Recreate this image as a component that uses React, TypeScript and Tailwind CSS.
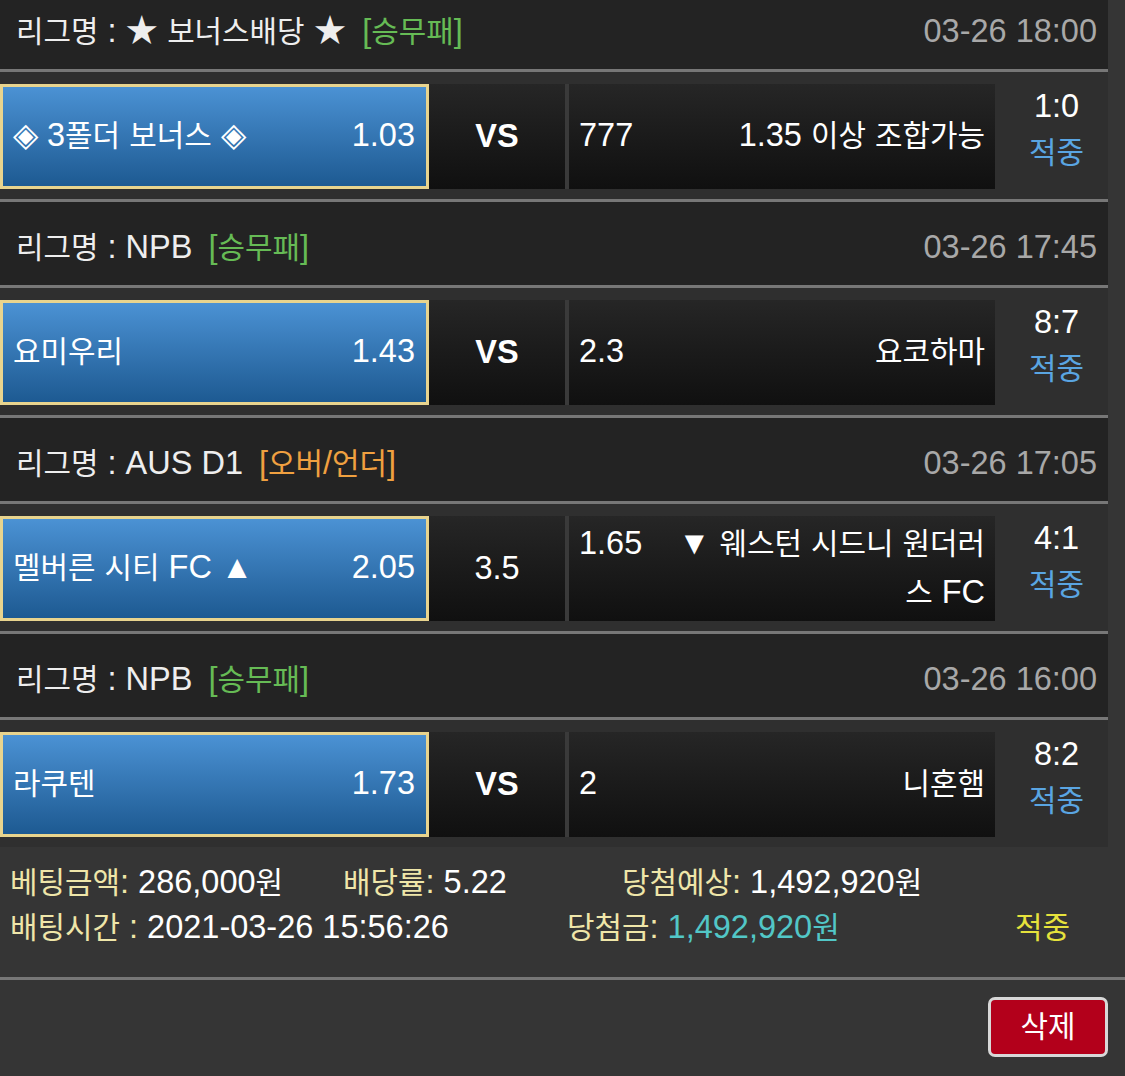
const FONT = { fontFamily: '"Liberation Sans", "Noto Sans CJK KR", sans-serif' };

// Hangul glyphs run a little narrower than the Latin ones in the original,
// so Hangul syllables get a slightly smaller size than digits and letters.
function K({ s }: { s: string }) {
  return (
    <>
      {s.split(/([가-힣]+)/).map((p, i) =>
        /[가-힣]/.test(p) ? (
          <span key={i} className="text-[0.92em]">
            {p}
          </span>
        ) : (
          p
        )
      )}
    </>
  );
}

type Game = {
  league: string;
  type: string;
  typeColor: string;
  time: string;
  home: string;
  homeOdds: string;
  mid: string;
  midBold: boolean;
  awayOdds: string;
  away: string;
  score: string;
};

const games: Game[] = [
  {
    league: "★ 보너스배당 ★",
    type: "[승무패]",
    typeColor: "text-[#66bb55]",
    time: "03-26 18:00",
    home: "◈ 3폴더 보너스 ◈",
    homeOdds: "1.03",
    mid: "VS",
    midBold: true,
    awayOdds: "777",
    away: "1.35 이상 조합가능",
    score: "1:0",
  },
  {
    league: "NPB",
    type: "[승무패]",
    typeColor: "text-[#66bb55]",
    time: "03-26 17:45",
    home: "요미우리",
    homeOdds: "1.43",
    mid: "VS",
    midBold: true,
    awayOdds: "2.3",
    away: "요코하마",
    score: "8:7",
  },
  {
    league: "AUS D1",
    type: "[오버/언더]",
    typeColor: "text-[#f0a040]",
    time: "03-26 17:05",
    home: "멜버른 시티 FC ▲",
    homeOdds: "2.05",
    mid: "3.5",
    midBold: false,
    awayOdds: "1.65",
    away: "▼ 웨스턴 시드니 원더러스 FC",
    score: "4:1",
  },
  {
    league: "NPB",
    type: "[승무패]",
    typeColor: "text-[#66bb55]",
    time: "03-26 16:00",
    home: "라쿠텐",
    homeOdds: "1.73",
    mid: "VS",
    midBold: true,
    awayOdds: "2",
    away: "니혼햄",
    score: "8:2",
  },
];

function GameBlock({ g, last }: { g: Game; last: boolean }) {
  return (
    <div>
      {/* league header */}
      <div className="h-[86px] bg-[#232323] border-b-[3px] border-[#777] flex items-center justify-between pl-[16px] pr-[11px] pt-[8px]">
        <div className="text-[#eeeeee]">
          <K s={`리그명 : ${g.league}`} />
          <span className={`ml-[16px] ${g.typeColor}`}>
            <K s={g.type} />
          </span>
        </div>
        <div className="text-[#a8a8a8]">{g.time}</div>
      </div>

      {/* bet row */}
      <div
        className={`bg-[#2f2f2f] flex pt-[12px] pb-[10px] ${
          last ? "" : "border-b-[3px] border-[#777]"
        }`}
      >
        <div className="w-[429px] h-[105px] border-[3px] border-[#e8d48e] bg-gradient-to-b from-[#4b92d4] to-[#1d5a92] flex items-center justify-between pl-[10px] pr-[11px] pb-[3px] text-white">
          <span>
            <K s={g.home} />
          </span>
          <span>{g.homeOdds}</span>
        </div>
        <div
          className={`w-[136px] h-[105px] bg-gradient-to-b from-[#262626] to-[#101010] flex items-center justify-center text-white ${
            g.midBold ? "font-bold" : ""
          }`}
        >
          {g.mid}
        </div>
        <div className="w-[4px] h-[105px] bg-[#3a3a3a]" />
        <div className="w-[426px] h-[105px] bg-gradient-to-b from-[#262626] to-[#101010] flex items-center pl-[10px] pr-[10px] pb-[2px] text-white">
          <div className="flex w-full items-start">
            <span className="leading-[48px] shrink-0">{g.awayOdds}</span>
            <span className="leading-[48px] flex-1 ml-[25px] text-right">
              <K s={g.away} />
            </span>
          </div>
        </div>
        <div className="flex-1 h-[105px] flex flex-col items-center justify-center pl-[10px] pb-[14px] leading-[46px]">
          <span className="text-white">{g.score}</span>
          <span className="text-[#5aa5e2]">
            <K s="적중" />
          </span>
        </div>
      </div>
    </div>
  );
}

export default function App() {
  return (
    <div className="w-[1125px] h-[1076px] overflow-hidden bg-[#353535] text-[32.5px]" style={FONT}>
      {/* game list */}
      <div className="w-[1108px] -mt-[14px]">
        {games.map((g, i) => (
          <GameBlock key={i} g={g} last={i === games.length - 1} />
        ))}
      </div>

      {/* bet summary */}
      <div className="pt-[13px] pb-[27px] pl-[10px] border-b-[3px] border-[#777] leading-[45px]">
        <div className="flex">
          <div className="w-[333px]">
            <span className="text-[#efe6a9]">
              <K s="베팅금액:" />
            </span>
            <span className="text-white">
              <K s=" 286,000원" />
            </span>
          </div>
          <div className="w-[279px]">
            <span className="text-[#efe6a9]">
              <K s="배당률:" />
            </span>
            <span className="text-white"> 5.22</span>
          </div>
          <div>
            <span className="text-[#efe6a9]">
              <K s="당첨예상:" />
            </span>
            <span className="text-white">
              <K s=" 1,492,920원" />
            </span>
          </div>
        </div>
        <div className="flex">
          <div className="w-[557px]">
            <span className="text-[#efe6a9]">
              <K s="배팅시간 :" />
            </span>
            <span className="text-white"> 2021-03-26 15:56:26</span>
          </div>
          <div className="w-[448px]">
            <span className="text-[#efe6a9]">
              <K s="당첨금:" />
            </span>
            <span className="text-[#52c7c7]">
              <K s=" 1,492,920원" />
            </span>
          </div>
          <div className="text-[#e6e23c]">
            <K s="적중" />
          </div>
        </div>
      </div>

      {/* actions */}
      <div className="flex justify-end pt-[17px] pr-[17px]">
        <button className="w-[120px] h-[60px] border-[3px] border-[#d8d8d8] rounded-[7px] bg-[#b3001b] text-white flex items-center justify-center">
          <K s="삭제" />
        </button>
      </div>
    </div>
  );
}
